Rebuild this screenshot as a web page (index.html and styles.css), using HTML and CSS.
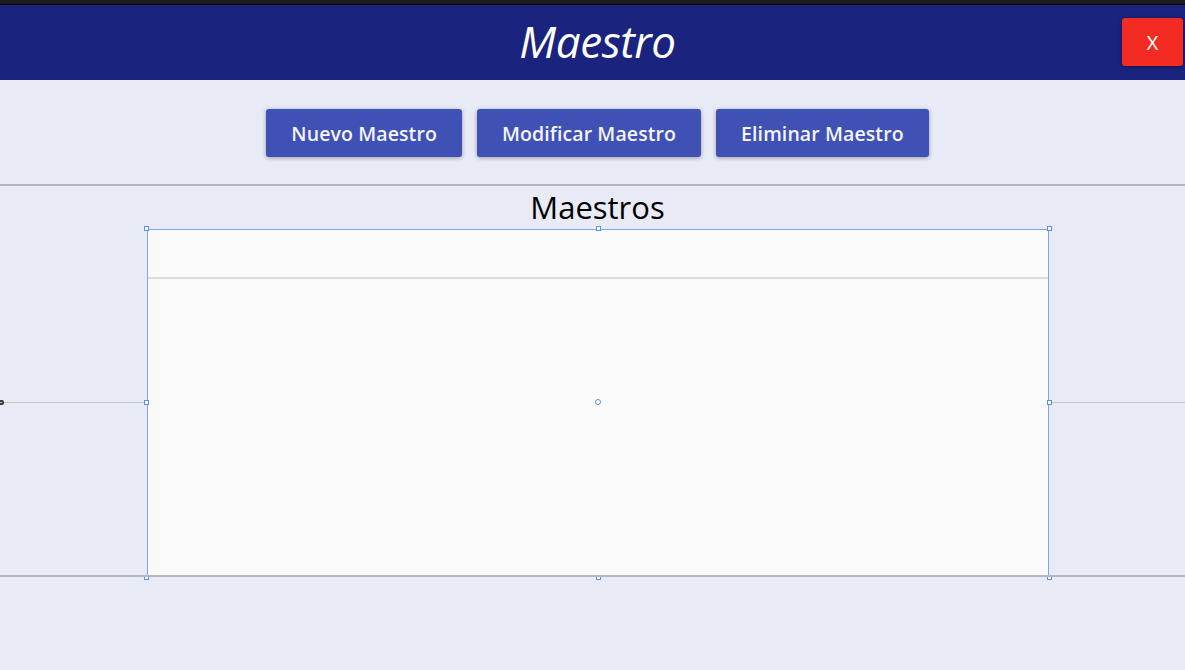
FILE: index.html
```html
<!DOCTYPE html>
<html lang="es">
<head>
<meta charset="utf-8">
<title>Maestro</title>
<link rel="stylesheet" href="styles.css">
</head>
<body>
<div class="topstrip"></div>
<header class="header">
  <h1 class="title">Maestro</h1>
  <button class="close">X</button>
</header>
<nav class="toolbar">
  <button class="btn">Nuevo Maestro</button>
  <button class="btn">Modificar Maestro</button>
  <button class="btn">Eliminar Maestro</button>
</nav>
<main class="main">
  <div class="guide guide-mid"></div>
  <div class="grip"></div>
  <h2 class="subtitle">Maestros</h2>
  <div class="table-wrap">
    <div class="grid">
      <div class="grid-head"></div>
      <div class="grid-body"></div>
    </div>
    <span class="h h-tl"></span>
    <span class="h h-tc"></span>
    <span class="h h-tr"></span>
    <span class="h h-ml"></span>
    <span class="h h-mr"></span>
    <span class="h h-bl"></span>
    <span class="h h-bc"></span>
    <span class="h h-br"></span>
    <span class="center-dot"></span>
  </div>
  <div class="bottom-line"></div>
</main>
</body>
</html>
```

FILE: styles.css
```css
* { box-sizing: border-box; }
html, body { margin: 0; padding: 0; }
body {
  width: 1185px;
  height: 670px;
  overflow: hidden;
  background: #e8eaf6;
  font-family: "Open Sans", "Noto Sans", sans-serif;
}
.topstrip {
  height: 5px;
  background: #1e1e1e;
  border-bottom: 1px solid #000;
}
.header {
  position: relative;
  height: 75px;
  background: #1a237e;
  display: flex;
  justify-content: center;
  align-items: center;
}
.title {
  margin: 0;
  font-family: "Open Sans", sans-serif;
  font-style: italic;
  font-weight: 400;
  font-size: 44px;
  color: #ffffff;
  letter-spacing: -0.4px;
  line-height: 1;
  padding-bottom: 4px;
  padding-left: 10px;
}
.close {
  position: absolute;
  right: 2px;
  top: 13px;
  width: 61px;
  height: 48px;
  border: none;
  border-radius: 3px;
  background: #f32b23;
  color: #ffffff;
  font-family: "Open Sans", sans-serif;
  font-weight: 500;
  font-size: 20px;
  box-shadow: 0 1px 4px rgba(0,0,0,0.45);
  padding: 0;
}
.toolbar {
  height: 106px;
  display: flex;
  justify-content: center;
  gap: 15px;
  padding-top: 29px;
  padding-left: 10px;
  border-bottom: 2px solid #b4b6c0;
}
.btn {
  height: 48px;
  padding: 0 25px;
  border: none;
  border-radius: 3px;
  background: #3f51b5;
  color: #f4f4fa;
  font-family: "Open Sans", sans-serif;
  font-weight: 600;
  font-size: 19.5px;
  letter-spacing: 0.1px;
  box-shadow: 0 1px 4px rgba(0,0,0,0.35);
}
.main {
  position: relative;
  height: 484px;
}
.guide {
  position: absolute;
  left: 0;
  right: 0;
  height: 1px;
  background: #c2c2c8;
}
.guide-mid { top: 216px; }
.grip {
  position: absolute;
  left: -2px;
  top: 214px;
  width: 6px;
  height: 5px;
  border: 2px solid #3a3a3a;
  border-radius: 2px;
}
.subtitle {
  margin: 0;
  height: 43px;
  line-height: 43px;
  text-align: center;
  padding-left: 10px;
  font-family: "Open Sans", sans-serif;
  font-weight: 400;
  font-size: 31px;
  color: #000;
}
.table-wrap {
  position: relative;
  width: 902px;
  margin-left: 147px;
  height: 347px;
}
.grid {
  height: 100%;
  background: #fafafa;
  border: 1px solid #7ea4ee;
  display: flex;
  flex-direction: column;
}
.grid-head {
  height: 49px;
  border-bottom: 2px solid #dcdcdc;
}
.grid-body { flex: 1; }
.h {
  position: absolute;
  width: 5px;
  height: 5px;
  border: 1px solid #5b8fef;
  background: #fff;
}
.h-tl { left: -3px; top: -3px; }
.h-tc { left: 449px; top: -3px; }
.h-tr { right: -3px; top: -3px; }
.h-ml { left: -3px; top: 171px; }
.h-mr { right: -3px; top: 171px; }
.h-bl { left: -3px; bottom: -4px; }
.h-bc { left: 449px; bottom: -4px; }
.h-br { right: -3px; bottom: -4px; }
.center-dot {
  position: absolute;
  left: 448px;
  top: 170px;
  width: 6px;
  height: 6px;
  border: 1px solid #5b8fef;
  border-radius: 50%;
  background: #fff;
}
.bottom-line {
  position: absolute;
  left: 0;
  right: 0;
  top: 389px;
  height: 2px;
  background: #b4b6c0;
}
```
